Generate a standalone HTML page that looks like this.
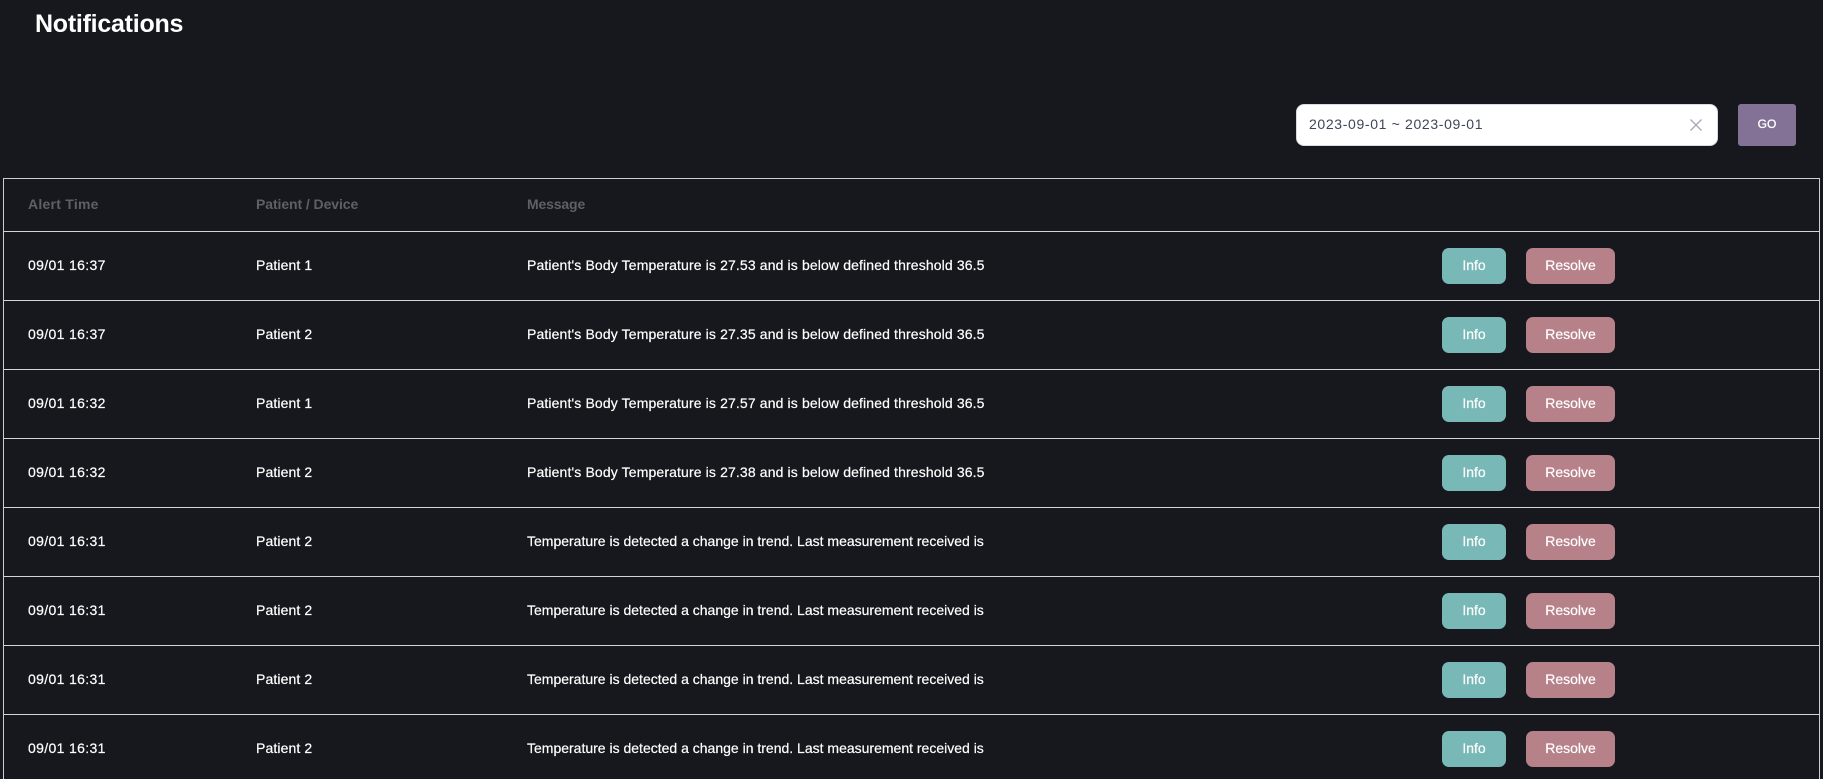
<!DOCTYPE html>
<html lang="en">
<head>
<meta charset="utf-8">
<title>Notifications</title>
<style>
html,body{margin:0;padding:0;width:1823px;height:779px;overflow:hidden;background:#16181d}
body{position:relative;font-family:"Liberation Sans",sans-serif;color:#fff}
h1{position:absolute;left:35px;top:8px;margin:0;font-size:25px;line-height:32px;font-weight:700;letter-spacing:-.25px}
.input{position:absolute;left:1296px;top:104px;width:422px;height:42px;box-sizing:border-box;background:#fff;border:1px solid #d8dbe0;border-radius:8px}
.input span{position:absolute;left:12px;top:0;line-height:38px;font-size:14px;color:#3f4658;letter-spacing:.65px;white-space:nowrap}
.input svg{position:absolute;left:392px;top:13px}
.go{position:absolute;left:1738px;top:104px;width:58px;height:42px;background:#837296;border-radius:3px;text-align:center;font-size:12px;line-height:40px;-webkit-text-stroke:.3px #fff}
.table{position:absolute;left:3px;top:178px;width:1817px;height:601px;box-sizing:border-box;border:1px solid #cfccd4;border-bottom:0;overflow:hidden}
.row{position:relative;height:68px;border-bottom:1px solid #d6d4da;font-size:14px;white-space:nowrap;-webkit-text-stroke:.2px #fff}
.row.head{height:52px;color:#5f6064;font-weight:700;font-size:14px;-webkit-text-stroke:0}
.row span{position:absolute;top:0;line-height:67px}
.row.head span{line-height:51px}
.c1{left:24px;letter-spacing:.35px}.c2{left:252px;letter-spacing:.12px}.c3{left:523px}
.row.head .c1{letter-spacing:.25px}.row.head .c2{letter-spacing:-.08px}.row.head .c3{letter-spacing:-.15px}
.p{letter-spacing:.13px}
.btn{position:absolute;top:16px;height:36px;border-radius:7px;text-align:center;line-height:35px;font-size:14px}
.info{left:1438px;width:64px;background:#78b9b7}
.res{left:1522px;width:89px;background:#b7818a}
</style>
</head>
<body>
<h1>Notifications</h1>
<div class="input"><span>2023-09-01 ~ 2023-09-01</span><svg width="14" height="14" viewBox="0 0 14 14"><path d="M1.5 1.5L12.5 12.5M12.5 1.5L1.5 12.5" stroke="#a3a8b4" stroke-width="1.3" fill="none"/></svg></div>
<div class="go">GO</div>
<div class="table">
<div class="row head"><span class="c1">Alert Time</span><span class="c2">Patient / Device</span><span class="c3">Message</span></div>
<div class="row"><span class="c1">09/01 16:37</span><span class="c2">Patient 1</span><span class="c3 p">Patient's Body Temperature is 27.53 and is below defined threshold 36.5</span><div class="btn info">Info</div><div class="btn res">Resolve</div></div>
<div class="row"><span class="c1">09/01 16:37</span><span class="c2">Patient 2</span><span class="c3 p">Patient's Body Temperature is 27.35 and is below defined threshold 36.5</span><div class="btn info">Info</div><div class="btn res">Resolve</div></div>
<div class="row"><span class="c1">09/01 16:32</span><span class="c2">Patient 1</span><span class="c3 p">Patient's Body Temperature is 27.57 and is below defined threshold 36.5</span><div class="btn info">Info</div><div class="btn res">Resolve</div></div>
<div class="row"><span class="c1">09/01 16:32</span><span class="c2">Patient 2</span><span class="c3 p">Patient's Body Temperature is 27.38 and is below defined threshold 36.5</span><div class="btn info">Info</div><div class="btn res">Resolve</div></div>
<div class="row"><span class="c1">09/01 16:31</span><span class="c2">Patient 2</span><span class="c3">Temperature is detected a change in trend. Last measurement received is</span><div class="btn info">Info</div><div class="btn res">Resolve</div></div>
<div class="row"><span class="c1">09/01 16:31</span><span class="c2">Patient 2</span><span class="c3">Temperature is detected a change in trend. Last measurement received is</span><div class="btn info">Info</div><div class="btn res">Resolve</div></div>
<div class="row"><span class="c1">09/01 16:31</span><span class="c2">Patient 2</span><span class="c3">Temperature is detected a change in trend. Last measurement received is</span><div class="btn info">Info</div><div class="btn res">Resolve</div></div>
<div class="row"><span class="c1">09/01 16:31</span><span class="c2">Patient 2</span><span class="c3">Temperature is detected a change in trend. Last measurement received is</span><div class="btn info">Info</div><div class="btn res">Resolve</div></div>
</div>
</body>
</html>
